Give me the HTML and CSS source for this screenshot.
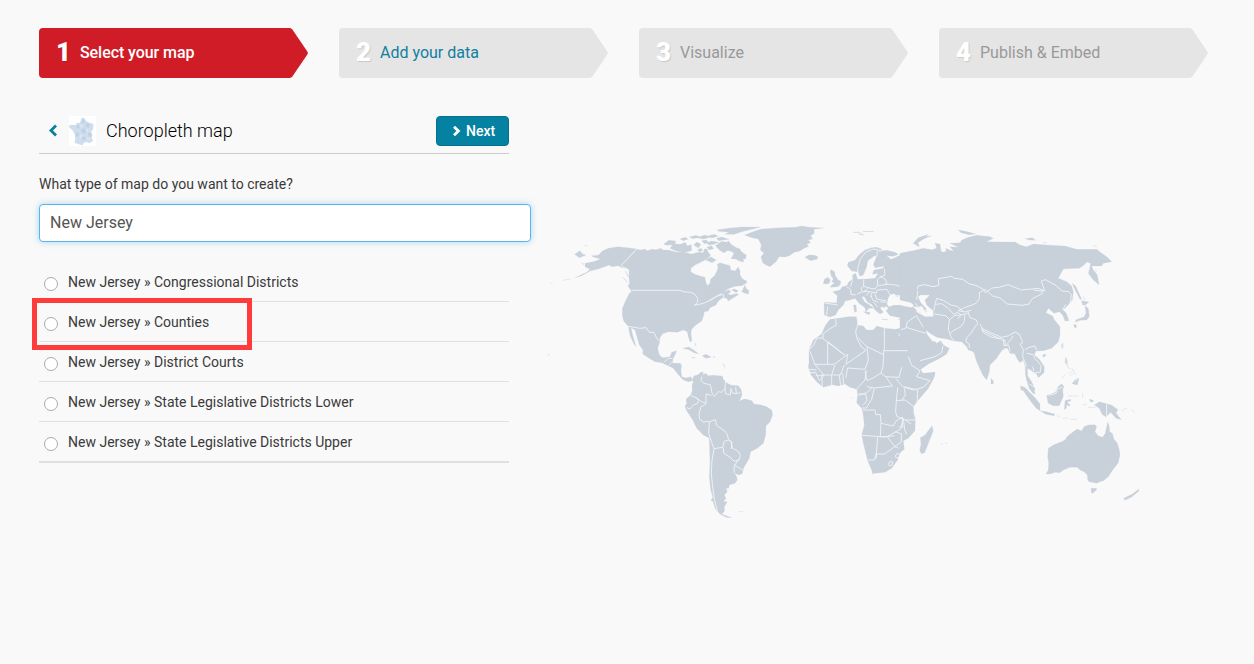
FILE: index.html
```html
<!DOCTYPE html>
<html lang="en">
<head>
<meta charset="utf-8">
<title>Select your map</title>
<link rel="stylesheet" href="styles.css">
</head>
<body>
<nav class="steps">
  <div class="step step-active"><span class="num">1</span><span class="label">Select your map</span></div>
  <div class="step step-link"><span class="num">2</span><span class="label">Add your data</span></div>
  <div class="step"><span class="num">3</span><span class="label">Visualize</span></div>
  <div class="step"><span class="num">4</span><span class="label">Publish &amp; Embed</span></div>
</nav>
<main class="content">
  <section class="panel">
    <header class="panel-head">
      <svg class="back" viewBox="0 0 10 14"><path d="M8 1.6 3 6.5l5 4.9"/></svg>
      <svg class="thumb" viewBox="117 303 81 90">
        <rect x="117" y="303" width="81" height="90" fill="#fff"/>
        <path fill="#cfdded" d="M155 308l8 1 6 10 11 5 11 3-2 15-6 10 4 7-2 10 4 8-9 7-13-3-6 3-3 7-12-3-13-5 3-12-2-14-7-12-10-8 2-7 13-1 8 2-1-8 9 1 4-6z"/>
        <path fill="#bfd1e5" d="M156 313l7 3 1 8-8 2zM140 328l10 4-2 9-9-3zM169 325l12 4-4 9-10-3zM155 343l10-3 6 9-8 7-9-4zM137 352l9 2 2 10-9 1zM174 353l10 1 1 9-9 3zM158 364l10 2-4 10-8-2z"/>
        <path fill="#dae5f1" d="M151 328l8 3-4 8-7-4zM166 342l8-2 2 9-7 2zM148 360l8-3 2 8-7 5zM170 368l8-2 3 7-9 2z"/>
      </svg>
      <h1 class="title">Choropleth map</h1>
      <button class="next"><svg class="next-icon" viewBox="0 0 9 12"><path d="M2 1.8 6.4 6 2 10.2"/></svg>Next</button>
    </header>
    <label class="question" for="map-type">What type of map do you want to create?</label>
    <input class="search" id="map-type" type="text" value="New Jersey">
    <div class="options">
      <label class="option"><span class="radio"></span>New Jersey » Congressional Districts</label>
      <label class="option marked"><span class="radio"></span>New Jersey » Counties</label>
      <label class="option"><span class="radio"></span>New Jersey » District Courts</label>
      <label class="option"><span class="radio"></span>New Jersey » State Legislative Districts Lower</label>
      <label class="option"><span class="radio"></span>New Jersey » State Legislative Districts Upper</label>
    </div>
  </section>
  <svg class="world" viewBox="540 215 620 310">
    <!-- North America and Greenland -->
    <g transform="translate(540 215) scale(.33333)">
      <path class="land" d="M135 145L160 140 182 132 160 126 155 122 175 121 187 108 205 100 235 95 262 98 290 102 300 105 315 103 322 107 335 103 348 104 362 100 370 105 385 105 410 112 430 111 455 117 475 112 490 113 493 102 500 101 505 112 512 120 500 133 485 140 465 150 453 160 452 170 465 178 480 183 495 187 497 200 502 212 510 205 512 192 524 182 530 170 534 160 532 148 540 143 555 148 570 152 572 165 585 168 595 156 600 168 600 180 608 192 620 198 620 204 605 212 585 214 565 221 550 232 568 224 572 232 562 236 572 240 588 236 597 238 565 258 560 250 548 248 535 258 528 270 510 278 505 288 493 290 490 305 485 318 465 332 455 343 453 355 456 378 450 381 445 365 442 350 430 345 412 352 385 350 368 356 360 368 358 385 353 400 358 420 368 428 390 425 395 412 410 407 405 420 399 432 398 445 412 448 425 450 423 465 425 485 440 494 452 488 458 497 445 500 430 495 415 478 405 462 380 450 365 443 345 440 325 428 308 417 309 405 298 390 285 345 273 338 278 360 284 380 288 395 282 388 270 362 265 334 251 318 247 300 247 280 258 255 268 235 275 230 264 213 269 205 266 180 268 165 258 158 245 158 235 152 215 155 208 150 175 162 150 168 125 182 105 188 140 172 150 163 135 155z"/>
      <path class="land" d="M104 118L120 107 127 117 138 120 118 128zM575 225l8-3 12 5-6 6zM605 230l10-20 3 10 9 7-2 11-12-4zM371 88l15-12 22 2-4 10-22 3zM390 100l10-14 22 2 14-6 5 10 13-3 1 18-20 5-25-3zM420 72l15-5 10 5-15 5zM448 66l20-5 11 5-20 5zM461 90l10-9 12 7-8 11zM485 77l15-2 5 8-12 3zM470 68l24-8 20 6-23 6zM500 97l15-5 6 9-13 4zM530 45l40-6 35-3 56 0-22 6-34 8-22 8-28 0 12-6-30-3zM530 70l15-4 22 7-32 4zM526 92l19-13 15 3 5-5 10 12 14 9 10 3 6 10 14 9-2 12-8-1 3 10-12-2-14-7-13-1 6-10 3-7-13-7-9 0-7 7-14-8zM498 135l13-10 18 10-13 8zM500 84l14-6 22 4-14 6-16 2zM505 62l18-4 12 6-20 5zM472 104l12-4 4 7-10 3z"/>
      <path class="land" d="M614 60L645 48 665 42 720 38 765 37 785 33 808 37 850 39 822 43 823 55 812 62 818 72 805 75 812 83 800 87 806 94 792 100 780 108 763 112 748 122 735 126 717 125 708 140 690 155 678 150 668 143 663 125 672 115 661 105 664 90 655 72 636 68zM799 127l12-6 12 3 10 2-1 6-20 5zM428 400l18-4 14 8 16 12-13-2-16-10zM487 422l10-4 17 8-14 4-8-3z"/>
      <path class="isle" d="M456 428h9M520 426h5M25 418l3 2M126 145l5 3M250 188l12 14M257 170l8 15M465 385l3 8"/>
      <path class="isle faint" d="M70 196l20-4M33 204h4M134 92h8M550 446l3 6"/>
      <path class="border" d="M290 102L243 152 258 162 268 180M275 226H420L430 230 452 232 465 238 473 250 473 262 463 271 490 265 515 254 530 244 550 238 552 250M545 235l-38 22M265 334L300 340 318 338 328 352 342 352 350 370 358 377M372 442l12-12h14M388 450l10-12M405 462l10-14"/>
    </g>
    <!-- South America -->
    <g transform="translate(670 360) scale(.33333)">
      <path class="land" d="M0 12L10 10 32 10 33 22 28 36 35 50 48 54 62 50 68 57 72 47 82 45 93 37 100 36 98 45 106 40 115 47 130 46 145 47 157 48 160 58 172 70 185 76 205 77 214 90 216 105 208 124 220 118 226 117 246 122 252 132 270 134 290 140 305 150 308 165 300 185 288 198 287 225 280 250 262 265 242 275 238 295 222 322 216 342 205 345 193 338 200 350 202 360 195 370 178 375 176 385 168 385 172 395 163 405 168 415 160 425 172 425 163 440 163 455 155 462 185 473 168 472 150 462 135 445 130 425 122 420 130 412 122 390 118 350 120 310 118 235 100 225 80 205 68 180 50 152 45 140 50 130 48 118 62 105 67 92 66 75 70 65 65 55 50 60 35 55 18 35z"/>
      <path class="isle" d="M0 5l8 5M126 400l6 25M130 425l10 22"/>
      <path class="isle faint" d="M208 455h10M160 12l5 12"/>
      <path class="border" d="M95 50l-2 10 8 10 20 4 5 25 7 10 12-14 10 2 10-12 2-24M108 102l16 4M108 102v30l-15 8-6 22 2 16 12 8 12-2 6 4M62 107l16 6 8 8-4 10-12 4-10 12-10-4M78 113l20 14h10M165 85l2 16 14 4 2-20M183 85l4 14 12 2-2-20M199 101l12-3M118 185l18-6 4 18 16 10 14 12 6 20 10 8-2 20M118 185l-2 35 10 30 6 16M132 266l26-4 5-18 12-4 8 4 4 20 18 10 6 12-4 14-14 4-10-10-22-15-1-16M132 266l-6 35-2 40 4 40 6 40 8 30M206 298l-12 18 28 16M193 314l-1 24"/>
    </g>
    <!-- Europe -->
    <g transform="translate(795 225) scale(.33333)">
      <path class="land" d="M157 122L160 112 180 106 192 90 210 75 230 68 245 67 260 72 255 78 275 76 300 82 310 88 295 94 275 92 288 103 300 98 316 90 330 88 340 80 370 78 390 72 415 75 425 70 440 82 460 78 480 80 480 250 415 275 400 272 390 258 380 242 370 247 350 243 365 255 360 270 330 275 310 277 285 272 273 258 280 250 272 242 270 248 262 245 255 248 265 262 255 267 240 255 230 238 218 232 208 215 200 214 208 230 224 240 235 250 222 250 212 262 210 248 192 235 180 220 165 225 150 228 145 240 130 255 122 270 105 276 88 270 87 232 125 234 127 212 113 200 135 195 142 185 155 182 162 170 174 163 172 150 182 145 188 163 215 162 240 160 250 145 232 148 237 135 265 130 268 124 240 128 235 118 245 95 238 92 218 108 215 125 205 150 195 154 188 140 170 138z"/>
      <path class="land" d="M108 182l10-8-8-4 5-8-6-8-4-14 4-6 10 6 2 12 8 12 8 5-1 10-8 6-22 2zM85 177l3-14 10-6 8 7-4 12zM30 96l12-6 16 1 10 3-7 6-20 4zM355 55l15-15 28-6 12-2-25 10-18 12 6 8zM205 260l20 2-3 8zM175 240l8 0 2 20-6 2zM310 278l10-2"/>
      <path class="land sea" d="M370 215l12-8 20 0 3 10-6 4 0 15 17 20 6 15-4 5-20-2-5-12 2-10-18-20zM276 237l4-18 6-10 12-3 8 10 12-9 8-2-4 12 20 10 14 14-6 6-20-3-14-4-20 0-14 5z"/>
      <path class="isle" d="M177 22l16 0 12 8-14-3M205 20l30-1M262 283l15 1M311 284l10-2"/>
      <path class="border" d="M190 150l-2-20 8-28 18-22 22-8 18 4 2 6M245 95l2-18M88 234l40 6M98 245l-3 25M155 184l12 10 1 14 14 2M172 166l-5 20M206 164v20l20 6 14 2 8-10-1-20M206 184l-8 6 4 10-16 8M202 200l22 0 20 4 3-10M218 192l-12 8M224 200l-10 12M232 202l-6 14M240 206l5 16 30 6M228 212l6 14 16 6M268 178l22 0 20 4 18 10-2 16-14 4-16 0M250 182l26-4-4-14-18-12M248 195l28-2 10 18M250 160l20-10-2-18M256 230l18 2M236 232l12 14M365 245l14 10 24 2M365 225l5-40 18-4h28l-2-14 30-4 8-10 28 6M365 270l14 5 4 15"/>
    </g>
    <!-- Asia -->
    <g transform="translate(900 220) scale(.33333)">
      <path class="land" d="M0 100L40 92 70 85 95 90 110 85 105 70 120 72 123 92 130 103 140 102 137 85 162 95 150 80 175 82 150 70 180 68 185 60 205 52 230 46 270 50 280 55 260 65 305 66 345 66 360 75 380 80 400 72 440 75 495 78 530 88 590 88 605 100 620 110 635 125 610 130 605 138 575 138 580 150 592 165 597 194 580 180 565 160 568 150 572 130 560 126 552 135 538 145 530 145 490 147 480 165 475 175 500 185 515 198 520 215 517 240 507 252 495 265 488 268 500 282 507 302 495 303 488 285 478 275 462 280 445 265 438 278 458 288 462 298 480 320 480 345 475 365 455 385 430 392 408 393 403 405 418 418 433 440 432 458 415 473 410 462 398 455 392 450 382 445 383 468 395 485 406 510 400 510 388 498 380 482 376 462 376 440 370 420 360 428 352 418 345 402 330 400 322 385 315 385 305 392 290 415 270 435 268 455 260 480 248 465 230 425 222 398 215 393 205 390 200 380 185 365 162 363 140 357 125 355 110 352 90 340 77 330 82 345 100 367 102 362 110 370 122 362 130 375 148 385 140 402 120 415 85 432 60 450 50 425 30 395 8 340 0 330V320L15 345 60 445 68 460 105 457 103 470 80 510H0V270L45 273 75 290 100 290V273L80 255 75 240 90 225H65L52 210 40 250 0 240z"/>
      <path class="land" d="M517 190l10 8 18 40-5 0-18-35zM545 242l22 4-12 10-8-2zM555 257l10 8 3 25-8 10-20 1-14 6 2-8 24-8 6-12zM521 314l8 0 0 10-6-2zM486 370l4 8-3 8-3-7zM428 405l8-3 1 6-8 4zM497 412l5 10 0 13-7-7zM273 475l7 8 0 8-7 1zM525 480l12-5-5 20-16-4zM472 504l12-12 6 6-6 12zM360 500l15 8-10 4zM40 70l15-17 30-10-12 12-20 12 5 14zM175 30l22 4 30 8-20 2-24-6zM375 56l22-3 10 8-20-1zM475 79l20 1z"/>
      <path class="isle faint" d="M505 440l5 8M510 455l10 8M517 448l5 6M497 462l-10 12M580 78h10M588 150v5M550 230l4 10M500 435l5 8M430 68h10"/>
      <path class="border" d="M52 208l2-10 20-4 25 6 18-4-2-20 25-4 15-3 8 6 25 3 20 14 20 4 22 12 6 10 20-14 20-2 28-8 40 16 50-5 20 8-10-30 12-4 30 16 20 18 20 2 8 8-4 30M256 208l22 20 22 6 22 18 45 4 20-4 10-16 28-14 3-8-28-4M256 208l-18 10v18l-10 14-20 8-18 6-15 8 20 4 18-5M110 235l-5 18 20-2 20 14 16 18 12-6 10 8-10 12M110 235l20 6 22 14 20 4 20 18M105 253l-4 20M102 282l35 5 12 12 14-12 30-4 14-6M148 299l-3 30 10 26 8 6M195 284l-2 20-10 16-24 12-8 8M205 278l4 14 20 8 4 10-12 16-8 14-12 12-4 12 10 8 2 12M240 312l12 22 26 12 22 10 10-6 15-2 20-12 12 6 10 20-2 10M245 325l30 14 28 12v6l-30-6-24-14zM310 355l2 22 14-2 4 20M304 360l12 2-2 14M340 348l-15 20-8 10M360 370l10 20-2 20 12 30M375 390l12-8 18-4 5 12M380 400l20 4 5 12 18 20-2 20-22 4M398 440l4 14M488 268l10-15M45 250l10 10-6 10 18 10M0 330l18-6 4-18 28-20M18 322l60 18M50 288l20 34M60 422l45-12 20-12 4-20"/>
    </g>
    <!-- Africa and the Red Sea -->
    <g transform="translate(795 310) scale(.33333)">
      <path class="land" d="M105 28L130 25 160 20 185 20 188 32 186 45 205 48 215 60 235 60 245 48 270 55 300 58 316 55 322 72 318 78 308 68 320 92 330 110 342 130 348 148 365 175 380 192 395 192 420 186 416 205 400 235 370 270 355 290 356 310 361 328 360 362 340 385 325 392 328 418 315 428 308 450 290 475 270 487 240 490 233 492 230 480 218 452 205 400 200 375 208 345 204 310 200 295 185 278 188 255 186 238 165 232 150 222 130 228 112 224 85 232 65 215 48 195 40 172 42 158 42 120 55 90 80 72 90 48z"/>
      <path class="land" d="M411 347l4 15-12 30-14 36-10 3-5-10 4-18-2-20 14-8z"/>
      <path class="isle faint" d="M168 262l2 3M438 403h5M452 400h4"/>
      <path class="border" d="M122 28l2 18-16 8-24 18v14l66 50-50-40H98v67H60L44 122M84 84H66L56 105l-14 15M98 163l20 0 40-30-5 30 28-20 32-22-14-10-14-28-3-20 8-20-5-20M188 82l28 28 50 24V122h72M268 52v70M216 110l4 40-10 28-52-4-6 30M266 134l-2 35-6 20-24 15-18 8-6-28M258 190l14 10 40 2 8-30M272 200l20 28-54 6-22-4M340 140l10 26 25 16-10 18 40 12-20 20-30 8-32-10-20-24M328 230l40 10-2 40M308 232l-4 40 26-2 26 20M328 235l3 20-10 16M304 272l-2 34 4 14 22 8 20 14M238 234l-8 34-16 26h-14M190 256l26-8 14-14M190 252h22l4 20-12 14M204 300h36l2 14h14l2 26 36 8 10-16 18-10v30l-10-2M258 340l-2 40h20l26-14 16-10 4-20M200 376l70 5 28-4M248 382l-5 65M243 432l26 0 36-26 14-10v-25l-20-6M278 382l22 28 10 4M218 450h20l6-20M325 325l4 35 6 12M330 330l30 0M300 440l6-10 8 4-4 12zM280 462l5-8 8 2-2 10-8 2zM60 163l20 24 8 10h-26M80 192l2 38M110 195v30M112 195h24l12-30M133 195l4 32M143 190l3 34M88 195l22 0 10-30M182 240l28-30 4-30M42 178l22 2M45 188l18 0 10 24 12-12"/>
    </g>
    <!-- Southeast Asia and Oceania -->
    <g transform="translate(1000 330) scale(.33333)">
      <path class="land" d="M145 355L160 345 185 335 195 330 203 318 220 305 232 297 245 303 252 290 265 285 285 284 290 290 285 305 295 318 308 322 316 310 323 275 328 290 329 305 337 310 342 328 352 340 358 360 360 375 354 400 338 420 325 440 310 452 300 455 290 460 268 455 263 450 262 435 252 425 240 420 232 412 210 412 190 420 180 428 165 427 150 432 138 432 145 420 146 400 143 380z"/>
      <path class="land" d="M273 475h15l3 3-12 12h-4zM416 478l1 5-22 18-20 10-4-6 25-12zM62 168l12 4 14 14 18 18 14 18 0 20-12-8-16-20-18-26zM82 158l14 8 10 25-6 0-12-15zM140 195l12-2 14-6 10-18 10-6 6 8-4 8 2 20-12 28-20 0-14-8zM120 242l20 3 25 8-3 4-25-4zM195 212l16-4 2 4-12 4 10 10-4 3-6-6-2 12-6 4zM268 208l12 3-2 6-8-3zM283 225l15-10 22 6 14 4 20 14-6 10 16 20-16-4-16-18-14 14-12-8-8-18z"/>
      <path class="isle faint" d="M190 40l-3 10M196 84l4 18M204 128l10 10M226 158l6-14M205 198l30 0M248 190v12M250 224l8 0M265 232h20M190 264l14 0M212 268l18 0M365 242l16-8M396 240l6 6M172 257l8 4M215 115l12 18"/>
      <path class="border" d="M320 221v44M142 196l16-2 10-4 6-14 14-4M88 162l16 10"/>
    </g>
  </svg>
</main>
</body>
</html>
```
FILE: styles.css
```css
*, *::after { box-sizing: border-box; }
body {
  margin: 0;
  padding: 28px 39px 0;
  height: 664px;
  overflow: hidden;
  background: #f9f9f9;
  color: #3a3a3a;
  font-family: Roboto, "Liberation Sans", sans-serif;
  font-size: 14px;
}
.steps { display: flex; gap: 31px; }
.step {
  flex: none;
  display: flex;
  align-items: center;
  width: 269px;
  height: 50px;
  padding: 0 0 2px 17px;
  border-radius: 4px;
  background: #e5e5e5;
  clip-path: polygon(0 0, 251px 0, 253px 1px, 268px 23px, 269px 25px, 268px 27px, 253px 49px, 251px 50px, 0 50px);
  color: #999;
  font-size: 16px;
}
.num {
  width: 24px;
  color: #fff;
  font-size: 26px;
  font-weight: 900;
  text-shadow: 1px 1px 1px rgba(0, 0, 0, .12);
}
.step-active { background: #d01c26; color: #fff; }
.step-active .label { font-weight: 500; letter-spacing: -.07px; }
.step-link { color: #107fa0; }
.content { display: flex; }
.panel { width: 501px; padding-top: 37px; }
.panel-head {
  display: flex;
  align-items: center;
  width: 470px;
  height: 39px;
  padding: 0 0 7px 9px;
  border-bottom: 1px solid #ccc;
}
.back { width: 10px; height: 14px; margin-right: 11px; }
.back path, .next-icon path { fill: none; stroke: #0a809f; stroke-width: 2.8; }
.thumb { width: 27px; height: 30px; }
.title {
  flex: 1;
  margin: 0 0 0 10px;
  color: #000;
  font-size: 18px;
  font-weight: 300;
}
.next {
  display: flex;
  align-items: center;
  width: 73px;
  height: 30px;
  padding: 0 0 0 15px;
  border: 1px solid #07708c;
  border-radius: 4px;
  background: #0582a1;
  color: #fff;
  font: 500 14px Roboto, "Liberation Sans", sans-serif;
}
.next-icon { width: 9px; height: 12px; margin-right: 5px; }
.next-icon path { stroke: #fff; }
.question { display: block; height: 50px; padding-top: 20px; line-height: 20px; }
.search {
  display: block;
  width: 492px;
  height: 38px;
  padding: 0 10px 2px;
  border: 1px solid #5bb4ec;
  border-radius: 4px;
  outline: 0;
  background: #fff;
  box-shadow: 0 0 6px rgba(82, 178, 236, .5);
  color: #555;
  font: 16px Roboto, "Liberation Sans", sans-serif;
}
.options { width: 470px; margin-top: 20px; border-bottom: 1px solid #ddd; }
.option {
  position: relative;
  display: flex;
  align-items: center;
  height: 40px;
  padding-left: 5px;
  border-bottom: 1px solid #e1e1e1;
}
.radio {
  width: 14px;
  height: 14px;
  margin: 4px 10px 0 0;
  border: 1px solid #aaa;
  border-radius: 50%;
  background: #fff;
}
.marked::after {
  content: "";
  position: absolute;
  left: -7px;
  top: -4px;
  width: 220px;
  height: 52px;
  border: 5px solid #ff3b3b;
}
.world { flex: none; width: 620px; height: 310px; margin-top: 137px; }
.land { fill: #c8d0da; stroke: #c8d0da; stroke-width: .6; stroke-linejoin: round; }
.land.sea { fill: #f9f9f9; stroke: #f9f9f9; }
.isle { fill: none; stroke: #d0d7df; stroke-width: 2.5; stroke-linecap: round; }
.isle.faint { stroke: #e0e5ea; }
.border { fill: none; stroke: #f0f3f6; stroke-width: 2.8; stroke-linejoin: round; }
```
